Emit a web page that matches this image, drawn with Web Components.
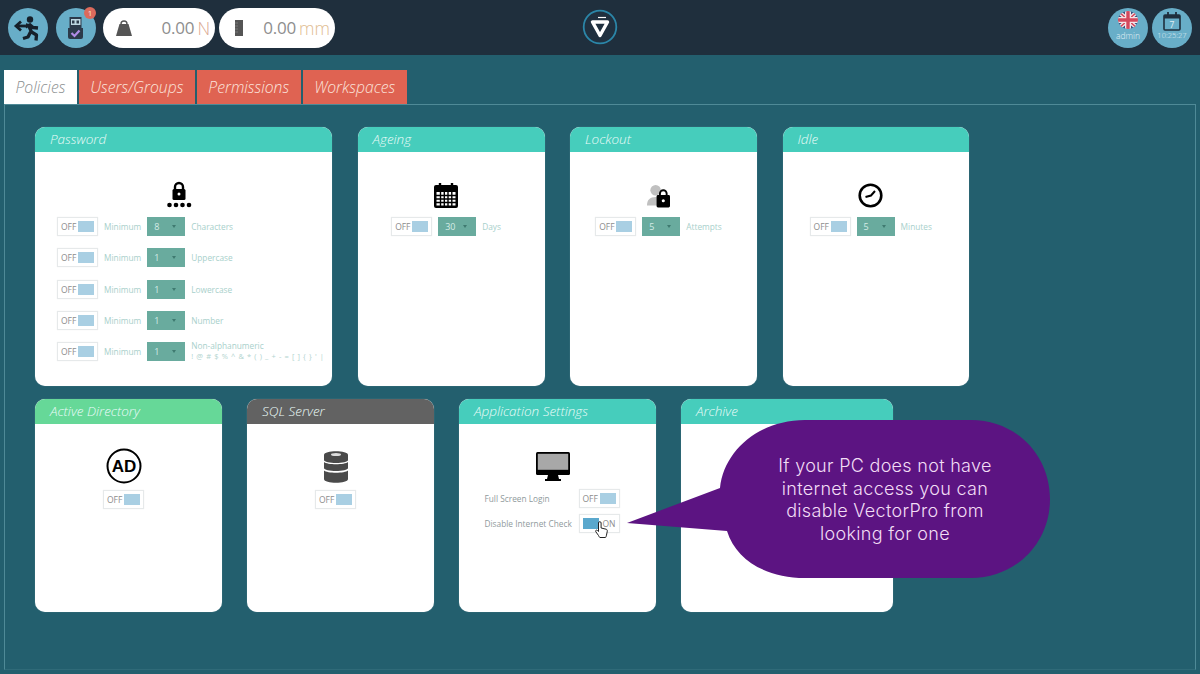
<!DOCTYPE html>
<html><head><meta charset="utf-8">
<style>
html,body{margin:0;padding:0;height:100%;overflow:hidden}
body{width:1200px;height:674px;background:#235f6e;font-family:"Open Sans",sans-serif;position:relative}
.grid{display:flex;flex-direction:column;gap:13px}
.r{display:flex;gap:25.5px}
.r2{gap:25px}
</style></head><body>

<script>
function def(name,css,html){
  customElements.define(name,class extends HTMLElement{
    connectedCallback(){
      if(this.shadowRoot) return;
      const s=this.attachShadow({mode:'open'});
      s.innerHTML='<style>'+css+'</style>'+(typeof html==='function'?html(this):html);
    }
  });
}
def('v-topbar',`:host{display:flex;align-items:center;height:55px;background:#1f2f3d;padding:0 8px;box-sizing:border-box}
 .l,.r{display:flex;align-items:center}.l{gap:8px;flex:1}.r{gap:4px;flex:1;justify-content:flex-end}
 .c{display:flex;flex:none;margin-top:-1px}`,
 `<div class="l"><slot name="left"></slot></div><div class="c"><slot name="center"></slot></div><div class="r"><slot name="right"></slot></div>`);
def('v-round',`:host{display:flex;flex:none;width:40px;height:40px;border-radius:50%;background:#68aec8;align-items:center;justify-content:center;position:relative;flex-direction:column;color:#e2f0f5;font-size:8.5px;line-height:9px}
 .b{position:absolute;top:-1px;right:0;width:12px;height:12px;border-radius:50%;background:#dc6a5c;color:#f6e4df;font-size:8px;line-height:12px;text-align:center}`,
 h=>`<slot></slot>`+(h.hasAttribute('badge')?`<span class="b">${h.getAttribute('badge')}</span>`:''));
def('v-readout',`:host{display:flex;flex:none;height:40px;border-radius:20px;background:#fff;align-items:center;box-sizing:border-box;padding:0 5px 0 11px;font-size:17px;color:#8e8e8e;font-weight:400;font-family:"Open Sans",sans-serif;margin-right:-4px}
 .s{flex:1;display:flex}.v{margin-right:3px;letter-spacing:-.2px}.u{font-weight:300;font-size:17.5px}`,
 h=>`<span class="s"><slot name="icon"></slot></span><span class="v">${h.getAttribute('value')}</span><span class="u" style="color:${h.getAttribute('ucolor')}">${h.getAttribute('unit')}</span>`);
def('v-tabs',`:host{display:flex;gap:2px;padding:15px 0 0 4px;height:34px;box-sizing:content-box}`,`<slot></slot>`);
def('v-tab',`:host{display:flex;align-items:center;justify-content:center;height:34px;background:#df6352;color:#fbe4dc;font-style:italic;font-weight:300;font-size:15.7px;box-sizing:border-box;padding:0 11.5px;font-family:"Open Sans",sans-serif}
 :host([active]){background:#fff;color:#8b8f90}`,`<slot></slot>`);
def('v-panel',`:host{display:block;margin:0 4px;height:566px;box-sizing:border-box;border:1px solid #4f8a97;padding:22px 0 0 30px;border-bottom-color:#2f6a78}`,`<slot></slot>`);
def('v-card',`:host{display:flex;flex-direction:column;flex:none;background:#fff;border-radius:10px;overflow:hidden;box-sizing:border-box;box-shadow:0 0 1px rgba(255,255,255,.4)}
 header{height:25px;flex:none;background:var(--hd,#46cdbc);color:#eafbf8;font-style:italic;font-weight:300;font-size:13.5px;line-height:25px;padding-left:15px;font-family:"Open Sans",sans-serif}
 section{flex:1;padding:var(--pt,26px) 10px 0 0;display:flex;flex-direction:column;align-items:center}`,
 h=>`<header>${h.getAttribute('heading')}</header><section><slot></slot></section>`);
def('v-icon',`:host{display:flex;height:var(--h,30px);margin-bottom:var(--mb,9px);align-items:flex-end;justify-content:center;flex:none}`,`<slot></slot>`);
def('v-row',`:host{display:flex;align-items:center;gap:6px;height:19px;font-size:8.3px;color:#a8d0cb;flex:none;margin-bottom:12.25px;font-family:"Open Sans",sans-serif;font-weight:400;white-space:nowrap}
 :host([start]){align-self:flex-start;margin-left:22px}
 :host([plain]){align-self:flex-start;margin-left:25.5px;margin-bottom:6px;color:#8f9a9c;justify-content:space-between;width:135px}`,`<slot></slot>`);
def('v-toggle',`:host{display:inline-flex;flex:none;position:relative;width:41px;height:19px;box-sizing:border-box;border:1px solid #e6e9ea;background:#fff;align-items:center;padding:0 3px;justify-content:space-between;font-size:8.5px;color:#8d8d8d;font-family:"Open Sans",sans-serif;box-shadow:0 0 1px #eee}
 i{display:block;width:16px;height:11px;background:#a9cfe3}
 :host([on]) i{background:#5aa8cd}`,
 h=>h.hasAttribute('on')?`<i></i><span>ON</span><slot></slot>`:`<span>OFF</span><i></i>`);
def('v-select',`:host{display:inline-flex;flex:none;width:38px;height:19px;background:#69ab9e;color:#d5ece6;align-items:center;justify-content:space-between;box-sizing:border-box;padding:0 9px 0 7px;font-size:9px;font-family:"Open Sans",sans-serif}
 b{width:0;height:0;border:2.5px solid transparent;border-top:3px solid #3f7a70;border-bottom:0}`,
 h=>`<span>${h.getAttribute('value')}</span><b></b>`);
def('v-stack',`:host{display:block;line-height:10px;font-size:8.3px;margin-top:-1px}
 div{font-size:7.5px;letter-spacing:.6px;color:#b2d4cf}`,h=>`<slot></slot><div>${h.getAttribute('sub')}</div>`);
def('v-callout',`:host{position:absolute;left:620px;top:415px;width:440px;height:170px;display:block}
 svg{position:absolute;inset:0}
 p{position:absolute;left:100px;width:330px;top:40px;margin:0;text-align:center;color:#f2ddf5;font:300 18px/22.5px Inter,"Open Sans",sans-serif;letter-spacing:.3px}`,
 `<svg width="440" height="170" viewBox="0 0 440 170"><path fill="#5c1482" d="M7 108 L100 73 C104 35 140 5 185 5 H351 C396 5 430 40 430 84 C430 128 396 163 351 163 H185 C146 163 116 145 107 116 Z"/></svg><p><slot></slot></p>`);
</script>

<v-topbar>
  <v-round slot="left"><svg width="40" height="40" viewBox="0 0 40 40"><path d="M13 13.500 8 18l5 4.500" fill="none" stroke="#16202a" stroke-width="2.800"/><path d="M8 18h9" stroke="#16202a" stroke-width="2.800"/><circle cx="22" cy="11.500" r="3.200" fill="#16202a"/><path d="M20 16l3.500 8 5 3-.5 5.500M22.500 24l-2.500 5-5 1.500M21 16l4 3.500 5 .5M20 16l-2.500 3.500" fill="none" stroke="#16202a" stroke-width="3.300" stroke-linejoin="round"/></svg></v-round>
  <v-round slot="left" badge="1" style="margin-right:-1px"><svg width="40" height="40" viewBox="0 0 40 40"><path d="M13.500 9h12v11h-12z" fill="#2c3a4a"/><path d="M15 11h9.500v6H15z" fill="#bcd6e0"/><path d="M16 12.500h2.500v3H16zM20.500 12.500H23v3h-2.500z" fill="#2c3a4a"/><path d="M12 20h15v9a2 2 0 0 1-2 2H14a2 2 0 0 1-2-2z" fill="#2c3a4a"/><path d="M15.500 25l3 3 5-5.500" fill="none" stroke="#b18be6" stroke-width="2.200"/></svg></v-round>
  <v-readout slot="left" value="0.00" unit="N" ucolor="#dba88f" style="width:112px"><svg slot="icon" width="18" height="17" viewBox="0 0 18 17" style="margin-left:1px"><path d="M6 5a3 3 0 1 1 6 0" fill="none" stroke="#555" stroke-width="1.400"/><path d="M4.500 5h9L17 17H1z" fill="#555"/></svg></v-readout>
  <v-readout slot="left" value="0.00" unit="mm" ucolor="#dfbd92" style="width:116px;padding-left:16px"><svg slot="icon" width="8" height="16" viewBox="0 0 8 16"><rect width="8" height="16" fill="#555"/><path d="M0 3h3M0 6h3M0 9h3M0 12h3" stroke="#888" stroke-width=".7"/></svg></v-readout>
  <svg slot="center" width="36" height="36" viewBox="0 0 36 36"><circle cx="18" cy="18" r="16.300" fill="#20303f" stroke="#2b86a8" stroke-width="1.800"/><path d="M10.500 13h15L18 26.500z" fill="none" stroke="#fff" stroke-width="3.400" stroke-linejoin="round"/><path d="M16 8.500h8" stroke="#fff" stroke-width="1.200"/></svg>
  <v-round slot="right"><svg width="20" height="18" viewBox="0 0 20 18" style="margin-top:-5px;border-radius:50%"><rect width="20" height="18" fill="#36507f"/><path d="M0 0 20 18M20 0 0 18" stroke="#f4e5e8" stroke-width="4"/><path d="M0 0 20 18M20 0 0 18" stroke="#d4485c" stroke-width="1.500"/><path d="M10 0v18M0 9h20" stroke="#f4e5e8" stroke-width="6"/><path d="M10 0v18M0 9h20" stroke="#d4485c" stroke-width="3.400"/></svg><span style="margin-top:2px;font-weight:300">admin</span></v-round>
  <v-round slot="right"><svg width="18" height="19" viewBox="0 0 18 19" style="margin-top:-3px"><rect x="1" y="3" width="16" height="15" rx="1" fill="#68aec8" stroke="#1f2f3d" stroke-width="1.600"/><rect x="1" y="3" width="16" height="3.500" fill="#1f2f3d"/><path d="M5 0v4M13 0v4" stroke="#1f2f3d" stroke-width="1.800"/><text x="9" y="15.500" font-size="8.500" text-anchor="middle" fill="#e2f0f5" font-family="Open Sans">7</text></svg><span style="font-size:7.5px;margin-top:0;font-weight:300">10:25:27</span></v-round>
</v-topbar>

<v-tabs><v-tab active>Policies</v-tab><v-tab>Users/Groups</v-tab><v-tab>Permissions</v-tab><v-tab>Workspaces</v-tab></v-tabs>

<v-panel><div class="grid">
 <div class="r" style="height:259px">
  <v-card heading="Password" style="width:297px">
   <v-icon><svg width="26" height="27" viewBox="0 0 26 27"><path d="M9 9V6a4 4 0 0 1 8 0v3" fill="none" stroke="#000" stroke-width="2.400"/><rect x="6.500" y="8" width="13" height="11" rx="1.500"/><circle cx="13" cy="13" r="1.500" fill="#fff"/><circle cx="3.500" cy="24" r="2.300"/><circle cx="10" cy="24" r="2.300"/><circle cx="16.500" cy="24" r="2.300"/><circle cx="23" cy="24" r="2.300"/></svg></v-icon>
   <v-row start><v-toggle></v-toggle><span>Minimum</span><v-select value="8"></v-select><span>Characters</span></v-row>
   <v-row start><v-toggle></v-toggle><span>Minimum</span><v-select value="1"></v-select><span>Uppercase</span></v-row>
   <v-row start><v-toggle></v-toggle><span>Minimum</span><v-select value="1"></v-select><span>Lowercase</span></v-row>
   <v-row start><v-toggle></v-toggle><span>Minimum</span><v-select value="1"></v-select><span>Number</span></v-row>
   <v-row start><v-toggle></v-toggle><span>Minimum</span><v-select value="1"></v-select><v-stack sub="! @ # $ % ^ &amp; * ( ) _ + - = [ ] { } ' |">Non-alphanumeric</v-stack></v-row>
  </v-card>
  <v-card heading="Ageing" style="width:187px">
   <v-icon><svg width="24" height="25" viewBox="0 0 24 25"><path d="M6 0v4M18 0v4" stroke="#000" stroke-width="2.400"/><rect y="2" width="24" height="23" rx="2"/><g fill="#fff"><rect x="2.500" y="9" width="19" height="13.500"/></g><g stroke="#000" stroke-width="1.400"><path d="M6.500 9v14M10.300 9v14M14 9v14M17.800 9v14M2 12.500h20M2 16h20M2 19.500h20"/></g></svg></v-icon>
   <v-row><v-toggle></v-toggle><v-select value="30"></v-select><span>Days</span></v-row>
  </v-card>
  <v-card heading="Lockout" style="width:187px">
   <v-icon><svg width="23" height="24" viewBox="0 0 24 24"><circle cx="9" cy="6" r="5.500" fill="#c0c0c0"/><path d="M0 22c0-6 3-9 9-9s7 3 7 9z" fill="#c0c0c0"/><rect x="10" y="11" width="14" height="13" rx="1.500"/><path d="M13.500 12V9.500a3.500 3.500 0 0 1 7 0V12" fill="none" stroke="#000" stroke-width="2"/><circle cx="17" cy="17" r="1.600" fill="#fff"/></svg></v-icon>
   <v-row><v-toggle></v-toggle><v-select value="5"></v-select><span>Attempts</span></v-row>
  </v-card>
  <v-card heading="Idle" style="width:186.500px">
   <v-icon><svg width="25" height="25" viewBox="0 0 25 25"><circle cx="12.500" cy="12.500" r="10.800" fill="none" stroke="#000" stroke-width="2.600"/><path d="M7.500 14 13 12.500 17 8" fill="none" stroke="#000" stroke-width="2"/></svg></v-icon>
   <v-row><v-toggle></v-toggle><v-select value="5"></v-select><span>Minutes</span></v-row>
  </v-card>
 </div>
 <div class="r r2" style="height:213px;--pt:24px;--h:36px;--mb:6px">
  <v-card heading="Active Directory" style="width:187px;--hd:#66d898">
   <v-icon><svg width="36" height="36" viewBox="0 0 36 36"><circle cx="18" cy="18" r="16.500" fill="none" stroke="#000" stroke-width="2"/><text x="18" y="24" text-anchor="middle" font-size="17" font-weight="700" font-family="Liberation Sans">AD</text></svg></v-icon>
   <v-row><v-toggle></v-toggle></v-row>
  </v-card>
  <v-card heading="SQL Server" style="width:187px;--hd:#626262">
   <v-icon><svg width="24" height="33" viewBox="0 0 24 33"><path d="M0 4c0-5 24-5 24 0v5c0 4-24 4-24 0z" fill="#4a4a4a"/><ellipse cx="12" cy="3.500" rx="5" ry="1.500" fill="#ddd"/><path d="M0 11c3 3 21 3 24 0v6c0 4-24 4-24 0zM0 19.500c3 3 21 3 24 0v8.500c0 5-24 5-24 0z" fill="#4a4a4a"/></svg></v-icon>
   <v-row><v-toggle></v-toggle></v-row>
  </v-card>
  <v-card heading="Application Settings" style="width:197px;--h:32px;--pt:25px;--mb:8px">
   <v-icon><svg width="34" height="29" viewBox="0 0 34 29"><rect width="34" height="23" rx="1.500"/><rect x="1.800" y="1.800" width="30.400" height="16" fill="#a8a8a8"/><path d="M12 23h10l1 4H11zM9 27h16v2H9z"/></svg></v-icon>
   <v-row plain><span>Full Screen Login</span><v-toggle></v-toggle></v-row>
   <v-row plain><span>Disable Internet Check</span><v-toggle on><svg style="position:absolute;left:15px;top:6px" width="13" height="17" viewBox="0 0 13 17"><path d="M3.500 9V2a1.300 1.300 0 0 1 2.600 0v5l5 1.200c1 .3 1.300 1 1.200 2L11.500 14c-.2 1-.6 2.500-1 2.500H5c-.5 0-1-1-1.500-2L1 11c-.6-.8-.5-1.500.2-1.800.6-.2 1.300.2 2.300 1.300z" fill="#fff" stroke="#222" stroke-width="1"/></svg></v-toggle></v-row>
  </v-card>
  <v-card heading="Archive" style="width:212px"></v-card>
 </div>
</div></v-panel>

<v-callout>If your PC does not have<br>internet access you can<br>disable VectorPro from<br>looking for one</v-callout>
</body></html>
